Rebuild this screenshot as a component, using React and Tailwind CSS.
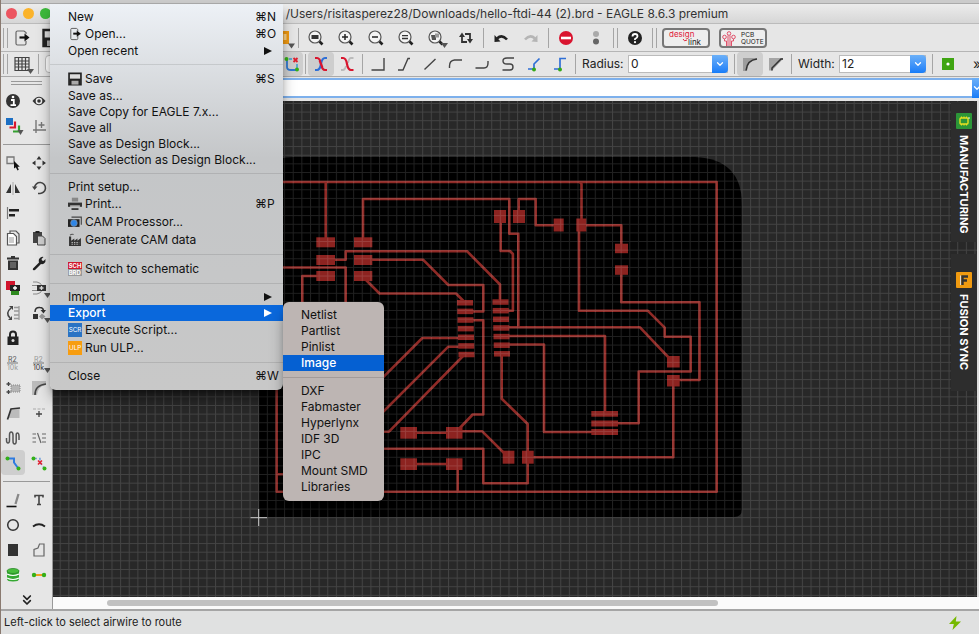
import { useState } from 'react'
import { ChevronDown, ChevronsDown } from 'lucide-react'

// --- ICONS (20x20 drawings) ---
const glass = (
  <>
    <circle cx="9" cy="9" r="6" fill="#f4f4f4" stroke="#555" strokeWidth="1.2" />
    <path d="M13.5 13.5l3 3" stroke="#222" strokeWidth="2.6" />
  </>
)
const tri = <path d="M15 15h7l-3.500 5z" fill="#555" />

const icons = {
  open: (
    <>
      <path d="M14 6V4.500L12 3H5.500Q4 3 4 4.500v11Q4 17 5.500 17h7Q14 17 14 15.500V13" fill="none" stroke="#666" strokeWidth="1.200" />
      <path d="M7.500 9.500h6" stroke="#111" strokeWidth="2.200" />
      <path d="M12.500 5.500l5 4-5 4z" fill="#111" />
    </>
  ),
  openMenu: (
    <>
      <path d="M14 6V3.500L12 2H5.500Q4 2 4 3.500v13Q4 18 5.500 18h7Q14 18 14 16.500V13" fill="none" stroke="#555" strokeWidth="1.300" />
      <path d="M7.500 9.500h6" stroke="#111" strokeWidth="2.800" />
      <path d="M12.500 5l6 4.500-6 4.500z" fill="#111" />
    </>
  ),
  save: (
    <>
      <path d="M1.500 2h17v16h-17z" fill="#ddd" stroke="#222" strokeWidth="2.400" />
      <path d="M2 9.500h16V18H2z" fill="#222" />
      <path d="M5 12.500h10V18H5z" fill="#aaa" />
    </>
  ),
  zoomFit: <>{glass}<path d="M5.500 7h7v4h-7z" fill="#333" /></>,
  zoomIn: <>{glass}<path d="M6 9h6M9 6v6" stroke="#222" strokeWidth="1.500" /></>,
  zoomOut: <>{glass}<path d="M6 9h6" stroke="#222" strokeWidth="1.500" /></>,
  zoomRedraw: <>{glass}<path d="M6 7.700h6M6 10.500h6" stroke="#333" strokeWidth="1.300" /></>,
  zoomSelect: <>{glass}<path d="M5 7h5v5H6z" fill="#555" /><path d="M9 5.500h4v4H9z" fill="#999" />{tri}</>,
  refresh: (
    <>
      <path d="M6 8v6h5M14 12V6H9" fill="none" stroke="#333" strokeWidth="1.800" />
      <path d="M3 9l3-4.500L9 9zM11 11h6l-3 4.500z" fill="#333" />
    </>
  ),
  undo: (
    <>
      <path d="M6 10.500Q11 6 16 11.500" fill="none" stroke="#222" strokeWidth="2.600" />
      <path d="M3.500 14V7l6 6.500z" fill="#222" />
    </>
  ),
  redo: (
    <>
      <path d="M14 10.500Q9 6 4 11.500" fill="none" stroke="#b5b5b5" strokeWidth="2.600" />
      <path d="M16.500 14V7l-6 6.500z" fill="#b5b5b5" />
    </>
  ),
  stop: <><circle cx="10" cy="10" r="7" fill="#d9142f" /><path d="M5 8.700h10v2.600H5z" fill="#fff" /></>,
  dots: <><circle cx="10" cy="6" r="3" fill="#aaa" /><circle cx="10" cy="13.500" r="3" fill="#666" /></>,
  help: (
    <>
      <circle cx="10" cy="10" r="7" fill="#222" />
      <path d="M7.500 8.500Q7.500 6 10 6t2.500 2.300Q12.500 9.700 10 11v1" fill="none" stroke="#fff" strokeWidth="1.800" />
      <circle cx="10" cy="14.200" r="1.100" fill="#fff" />
    </>
  ),
  orange: <><path d="M2 3h11v13H2z" fill="#f09a12" /><path d="M7.500 6h3v6h-3z" fill="#fbd38a" /><path d="M12 15.500h7l-3.500 5z" fill="#555" /></>,
  grid: (
    <>
      <path d="M3 3.500h14v13H3zM6.500 3.500v13M10 3.500v13M13.500 3.500v13M3 7h14M3 10h14M3 13h14" fill="none" stroke="#444" strokeWidth="1.200" />
      {tri}
    </>
  ),
  ratsnest: (
    <>
      <path d="M5 5v8q0 3 4 3h6" fill="none" stroke="#2f78d0" strokeWidth="1.800" />
      <path d="M7 5h3M15 10v4" stroke="#3a9ad0" strokeWidth="1.500" />
      <path d="M11.500 4l4 4M15.500 4l-4 4" stroke="#e02030" strokeWidth="1.800" />
      <circle cx="4.500" cy="5" r="2" fill="#35b018" />
      <circle cx="15" cy="15.500" r="2" fill="#35b018" />
    </>
  ),
  crossA: (
    <>
      <path d="M4 4h2q3 0 4 6t4 6h2" fill="none" stroke="#d8152e" strokeWidth="2.200" />
      <path d="M4 16h2q3 0 4-6t4-6h2" fill="none" stroke="#2f6fd6" strokeWidth="2.200" />
      <path d="M8.500 6.500q1 1.500 1.500 3.500t1.500 3.500" fill="none" stroke="#d8152e" strokeWidth="2.200" />
    </>
  ),
  crossB: (
    <>
      <path d="M11 9q1-5 3-5h2.500" fill="none" stroke="#bbb" strokeWidth="1.800" />
      <path d="M4 16h2q2 0 3-4" fill="none" stroke="#bbb" strokeWidth="1.800" />
      <path d="M4 4h2q3 0 4 6t4 6h2.500" fill="none" stroke="#d8152e" strokeWidth="2.200" />
    </>
  ),
  bend0: <path d="M3.500 16H16V4" fill="none" stroke="#444" strokeWidth="1.400" />,
  bend1: <path d="M4 16h5l5-11.500h2" fill="none" stroke="#444" strokeWidth="1.400" />,
  bend2: <path d="M4.500 15.500L15.500 5" fill="none" stroke="#444" strokeWidth="1.400" />,
  bend3: <path d="M3.500 14v-2q0-5.500 5-6H16" fill="none" stroke="#444" strokeWidth="1.400" />,
  bend4: <path d="M3.500 14H12q4 0 4-5V7" fill="none" stroke="#444" strokeWidth="1.400" />,
  bend5: <path d="M16 4H9Q5 4 5 7t4 3h3q3 0 3 3t-3 3H4.500" fill="none" stroke="#444" strokeWidth="1.400" />,
  bend6: (
    <>
      <path d="M4 15h6v-5l5.500-5.500" fill="none" stroke="#2f6fd6" strokeWidth="1.700" />
      <circle cx="10" cy="15.500" r="2" fill="#35a818" />
    </>
  ),
  bend7: (
    <>
      <path d="M4 15h6V4.500h6" fill="none" stroke="#2f6fd6" strokeWidth="1.700" />
      <circle cx="10" cy="15.500" r="2" fill="#35a818" />
    </>
  ),
  round: <><path d="M3 4h14v1Q8 6 7 17H3z" fill="#9d9d9d" /><path d="M6 16.500Q7 6 17 5" fill="none" stroke="#333" strokeWidth="1.500" /></>,
  chamfer: <><path d="M3 4h14v1L6 16.500H3z" fill="#a5a5a5" /><path d="M6 16.500V14L15 5h2" fill="none" stroke="#333" strokeWidth="1.500" /></>,
  via: <><path d="M4 4h12v12H4z" fill="#3fa512" /><circle cx="10" cy="10" r="1.600" fill="#fff" /></>,
  // side palette
  info: (
    <>
      <circle cx="10" cy="10" r="7" fill="#333" />
      <path d="M8 9h2.800v5M7.500 14.200h5.500" fill="none" stroke="#fff" strokeWidth="1.800" />
      <circle cx="10" cy="6" r="1.300" fill="#fff" />
    </>
  ),
  eye: (
    <>
      <path d="M3.500 10Q10 1.500 16.500 10 10 18.500 3.500 10z" fill="#333" />
      <circle cx="10" cy="10" r="3.300" fill="#eee" />
      <circle cx="10" cy="10" r="1.800" fill="#333" />
    </>
  ),
  layers: (
    <>
      <path d="M3 2h7v7H3z" fill="#1c6fc4" />
      <path d="M12 5.500v6H6.500" fill="none" stroke="#d8152e" strokeWidth="2.200" />
      <path d="M16 9.500v6h-6" fill="none" stroke="#35a030" strokeWidth="2.200" />
      <path d="M14.500 14h6l-3 5z" fill="#555" />
    </>
  ),
  mark: <path d="M7 4v13M4 14h13M9.500 9h6M12.500 6v6" fill="none" stroke="#777" strokeWidth="1.400" />,
  select: (
    <>
      <path d="M4 4h7v6.500H4z" fill="none" stroke="#777" strokeWidth="1.300" />
      <path d="M11 8v7.500l1.800-1.300 1.700 3.300 1.300-.8-1.300-3h2.300z" fill="#111" />
    </>
  ),
  move: <path d="M10 3l2.500 3.500h-5zM10 17l2.500-3.500h-5zM3 10l3.500-2.500v5zM17 10l-3.500-2.500v5z" fill="#333" />,
  mirror: <><path d="M10 4v13" stroke="#aaa" /><path d="M8 6v9H3zM12 6v9h5z" fill="#333" /></>,
  rotate: <><path d="M9 15.500h1.500A5.500 5.500 0 1 0 5.500 9.500" fill="none" stroke="#444" strokeWidth="1.600" /><path d="M3 8.500h5.500L5.500 12z" fill="#444" /></>,
  align: <><path d="M4.500 4v12" stroke="#777" strokeWidth="1.200" /><path d="M6 6h10v2.600H6zM6 11h6v2.600H6z" fill="#222" /></>,
  copy: (
    <>
      <path d="M7 5V3h6l3 3v9h-2" fill="none" stroke="#555" strokeWidth="1.200" />
      <path d="M4.500 5.500h6l3 3V17h-9z" fill="#fff" stroke="#555" strokeWidth="1.200" />
      <path d="M6 10h5M6 12h5M6 14h5" stroke="#999" />
    </>
  ),
  paste: <><path d="M4 4h9v11H4z" fill="#444" /><path d="M6.500 3h4v2h-4z" fill="#222" /><path d="M8.500 8h5l2.500 2.500V17H8.500z" fill="#ccc" stroke="#444" /></>,
  trash: <><path d="M4 4.500h12v2H4zM8 3h4v2H8zM5 7.500h10V17H5z" fill="#333" /><path d="M8 9v6M10 9v6M12 9v6" stroke="#aaa" strokeWidth=".8" /></>,
  wrench: <path d="M4 15.500l6-6Q9 6 11.500 4.500q1.700-1 3-.5l-2 2 .5 1.500 1.500.5 2-2q.5 3-1.500 4.500-1.500 1-3 .5l-6 6q-3 1-2-1.500z" fill="#222" />,
  add: (
    <>
      <path d="M3 3h9v9H3z" fill="#d0142c" />
      <path d="M8 12h8v5H8z" fill="#2f8a20" />
      <path d="M7 7h10v6H7z" fill="#222" />
      <path d="M12 8v4M10 10h4" stroke="#fff" strokeWidth="1.300" />
    </>
  ),
  addPin: (
    <>
      <path d="M4 4h4q4 0 6 6-2 6-6 6H4M3 7.500h6M3 12.500h6" fill="none" stroke="#888" />
      <path d="M8 7h9v6H8z" fill="#333" />
      <path d="M12.500 8v4M10.500 10h4M3 10h4" stroke="#ddd" strokeWidth="1.300" />
      {tri}
    </>
  ),
  pinswap: (
    <>
      <path d="M8 5Q2 10 7 15" fill="none" stroke="#444" strokeWidth="1.600" />
      <path d="M6 3h4v4zM5 17h4v-4z" fill="#444" />
      <path d="M16 3v14M11 4.500h5M11 8h5M11 12h5M11 15.500h5" stroke="#999" strokeWidth="1.300" />
    </>
  ),
  gateswap: (
    <>
      <path d="M6 9q0-5 5-4.500 3 0 3.500 3" fill="none" stroke="#333" strokeWidth="1.500" />
      <path d="M11.500 7h5.500l-2.500 3.500zM4 11h5v5H4z" fill="#333" />
      <path d="M13 10.500l3.500 3-3.500 3-3-3z" fill="#999" />
      {tri}
    </>
  ),
  lock: (
    <>
      <path d="M7 9V6.500q0-3 3-3t3 3V9" fill="none" stroke="#222" strokeWidth="2" />
      <path d="M4.500 8.500h11V17h-11z" fill="#222" />
      <circle cx="10" cy="12.500" r="1.500" fill="#ddd" />
    </>
  ),
  name: (
    <>
      <text x="5" y="8.500" fontSize="7" fill="#555">R2</text>
      <path d="M4 10h11" stroke="#777" />
      <text x="4" y="17" fontSize="7" fill="#999">10k</text>
    </>
  ),
  value: (
    <>
      <text x="5" y="8.500" fontSize="7" fill="#999">R2</text>
      <path d="M4 10h11" stroke="#777" />
      <text x="4" y="17" fontSize="7" fill="#333">10k</text>
      {tri}
    </>
  ),
  smash: <><path d="M8 7h9v7H8z" fill="#b5b5b5" stroke="#888" strokeDasharray="1 1" /><path d="M3.500 6h4M5.500 4v4M3.500 14h4M5.500 12v4" stroke="#444" strokeWidth="1.300" /></>,
  miter: <><path d="M3 3h14v4Q9 8 8 17H3z" fill="#bbb" /><path d="M6 17Q6 7 17 6" fill="none" stroke="#444" strokeWidth="1.600" /></>,
  split: <><path d="M7.500 7l9-1v9h-11z" fill="#bbb" /><path d="M4.500 16.500L8 6l9-1" fill="none" stroke="#333" strokeWidth="1.700" /></>,
  optimize: <><path d="M4 6h3M8.500 6h3M13 6h3" stroke="#aaa" /><path d="M10 8v6M7 11h6" stroke="#444" strokeWidth="1.300" /></>,
  meander: <path d="M3.500 10v2q0 3 1.500 3t1.500-3V7q0-3 1.700-3T10 7v6q0 3 1.600 3t1.600-3V7q0-2 1.300-2T16 8v4" fill="none" stroke="#555" strokeWidth="1.500" />,
  fanout: <path d="M3.500 6H7M3.500 10H7M3.500 14H7M8.500 5l3.500 10M13 6h4M13 10h4M13 14h4" stroke="#666" strokeWidth="1.200" />,
  route: (
    <>
      <path d="M5 5.500h6v4l4 5.500" fill="none" stroke="#2f7be0" strokeWidth="2" />
      <circle cx="4.500" cy="5.500" r="2" fill="#35b018" />
      <circle cx="15.500" cy="15.500" r="2" fill="#35b018" />
    </>
  ),
  ripup: (
    <>
      <path d="M5 5.500h6v4l4 5.500" fill="none" stroke="#7aa5dd" strokeDasharray="3 2" strokeWidth="1.500" />
      <path d="M9 7.500l4 4M13 7.500l-4 4" stroke="#e02030" strokeWidth="1.600" />
      <circle cx="4.500" cy="5.500" r="2" fill="#35b018" />
      <circle cx="15.500" cy="15.500" r="2" fill="#35b018" />
    </>
  ),
  line: <><path d="M3.500 16.500h10" stroke="#111" strokeWidth="1.600" /><path d="M12.500 14l3-10" stroke="#888" strokeWidth="2.300" /></>,
  text: <path d="M6 7.500V5.500h8v2M10 5.500V14M8 14.500h4" fill="none" stroke="#444" strokeWidth="1.600" />,
  circle: <circle cx="10" cy="10" r="5.300" fill="none" stroke="#333" strokeWidth="1.500" />,
  arc: <path d="M4 11.500q6-4.500 12 0" fill="none" stroke="#222" strokeWidth="1.900" />,
  rect: <path d="M5 4h10v12H5z" fill="#333" />,
  polygon: <path d="M5 16V9.500L9 8l1.500-4H15v12z" fill="none" stroke="#666" strokeWidth="1.200" />,
  viaStack: (
    <>
      <path d="M4 6v8q0 2.500 6 2.500t6-2.500V6z" fill="#35a832" />
      <path d="M4 9q6 3 12 0M4 13q6 3 12 0" fill="none" stroke="#fff" strokeWidth="1.200" />
      <ellipse cx="10" cy="6" rx="6" ry="2.500" fill="#48bd3c" stroke="#2b8a28" strokeWidth=".8" />
    </>
  ),
  signal: (
    <>
      <path d="M5 10h10" stroke="#f0a020" strokeWidth="2" />
      <circle cx="5" cy="10" r="2.200" fill="#35b018" />
      <circle cx="15" cy="10" r="2.200" fill="#35b018" />
    </>
  ),
  // menu
  print: (
    <>
      <path d="M5.500 1h9v5.500h-9z" fill="#888" />
      <path d="M0 8h20v6H0z" fill="#333" />
      <path d="M3 12h14v2H3z" fill="#ccc" />
      <path d="M5 16h10v2.500H5z" fill="#333" />
    </>
  ),
  cam: (
    <>
      <path d="M5 3h14v11" fill="none" stroke="#444" strokeWidth="1.600" />
      <path d="M0 6h16.500v11H0z" fill="#222" />
      <circle cx="8.500" cy="11.500" r="4.800" fill="#2f86e6" stroke="#999" strokeWidth=".8" />
    </>
  ),
  factory: (
    <>
      <path d="M1.500 18.500V5h3v6L9 8v3l4.500-3v3L18.500 7v11.500z" fill="#333" />
      <path d="M3 3q2-2 5-1" stroke="#555" fill="none" strokeWidth="1.500" />
      <path d="M5 13.500h11M5 16h11" stroke="#ddd" strokeWidth="1.200" strokeDasharray="2 1.500" />
    </>
  ),
  schBrd: (
    <>
      <path d="M0 0h20v10H0z" fill="#d0182c" />
      <path d="M0 10h20v10H0z" fill="#999" />
      <text x="1" y="8.800" fontSize="8.500" fontWeight="700" fill="#fff">SCH</text>
      <text x="1" y="18.500" fontSize="8.500" fontWeight="700" fill="#fff">BRD</text>
    </>
  ),
  scr: <><path d="M0 0h20v20H0z" fill="#2a73c4" /><text x="1" y="13.500" fontSize="9" fill="#fff">SCR</text></>,
  ulp: <><path d="M0 0h20v20H0z" fill="#f79d10" /><text x="1.500" y="13.500" fontSize="9" fill="#fff">ULP</text></>,
}

function Icon({ name, className = 'w-5 h-5' }) {
  return (
    <svg viewBox="0 0 20 20" className={`shrink-0 overflow-visible ${className}`} aria-hidden="true">
      {icons[name]}
    </svg>
  )
}

function Tool({ name, pressed, className = 'w-[30px]' }) {
  return (
    <button
      aria-label={name}
      className={`h-6 shrink-0 flex items-center justify-center rounded-sm ${className} ${pressed ? 'bg-[#cecece]' : ''}`}
    >
      <Icon name={name} />
    </button>
  )
}

const Sep = () => <div className="w-[5px] h-5 shrink-0 flex justify-center"><div className="w-px bg-[#a5a5a5]" /></div>

const DoubleSep = () => (
  <div className="w-[9px] h-5 shrink-0 flex justify-center gap-[3px]">
    <div className="w-px bg-[#a5a5a5]" />
    <div className="w-px bg-[#a5a5a5]" />
  </div>
)

function Combo({ id, label, value, labelClass, boxClass }) {
  return (
    <>
      <label htmlFor={id} className={`ml-1 shrink-0 ${labelClass}`}>{label}</label>
      <div className={`relative shrink-0 h-[18px] flex ${boxClass}`}>
        <select id={id} className="appearance-none w-full bg-white border border-[#bbb] pl-0.5 leading-4 outline-none">
          <option>{value}</option>
        </select>
        <span className="absolute right-0 inset-y-0 w-4 rounded-r-sm bg-gradient-to-b from-[#6bb0f8] to-[#147cf8] flex items-center justify-center pointer-events-none">
          <ChevronDown size={10} strokeWidth={3} color="#fff" />
        </span>
      </div>
    </>
  )
}

// --- MENUS ---
const fileMenu = [
  { label: 'New', keys: '⌘N' },
  { label: 'Open...', icon: 'openMenu', keys: '⌘O' },
  { label: 'Open recent', arrow: true },
  null,
  { label: 'Save', icon: 'save', keys: '⌘S' },
  { label: 'Save as...' },
  { label: 'Save Copy for EAGLE 7.x...' },
  { label: 'Save all' },
  { label: 'Save as Design Block...' },
  { label: 'Save Selection as Design Block...' },
  null,
  { label: 'Print setup...' },
  { label: 'Print...', icon: 'print', keys: '⌘P' },
  { label: 'CAM Processor...', icon: 'cam' },
  { label: 'Generate CAM data', icon: 'factory' },
  null,
  { label: 'Switch to schematic', icon: 'schBrd' },
  null,
  { label: 'Import', arrow: true },
  { label: 'Export', arrow: true, sub: true },
  { label: 'Execute Script...', icon: 'scr' },
  { label: 'Run ULP...', icon: 'ulp' },
  null,
  { label: 'Close', keys: '⌘W' },
]

const exportMenu = [
  'Netlist', 'Partlist', 'Pinlist', 'Image', null,
  'DXF', 'Fabmaster', 'Hyperlynx', 'IDF 3D', 'IPC', 'Mount SMD', 'Libraries',
]

function ExportMenu() {
  const [active, setActive] = useState('Image')
  return (
    <ul className="absolute left-full -top-[3px] w-[101px] pt-[5px] pb-1.5 rounded-md bg-[#bdb5b3] text-[#111] shadow-lg shadow-black/50">
      {exportMenu.map((label, i) =>
        label ? (
          <li key={i}>
            <button
              onMouseEnter={() => setActive(label)}
              className={`w-full h-4 flex items-center pl-[18px] ${label === active ? 'bg-[#0560d2] text-white font-medium' : ''}`}
            >
              {label}
            </button>
          </li>
        ) : (
          <li key={i} className="h-3 flex items-center"><div className="w-full h-px bg-[#a39b99]" /></li>
        )
      )}
    </ul>
  )
}

function FileMenu() {
  return (
    <ul className="absolute left-[49px] top-1 w-[233px] pt-[5px] pb-1.5 z-20 rounded-b-md bg-gradient-to-b from-[#edf1f6] via-[#c4c6c8] via-40% to-[#c8c8c8] text-[#111] shadow-lg shadow-black/50">
      {fileMenu.map((item, i) =>
        item ? (
          <li key={i} className="relative">
            <button
              className={`w-full flex items-center pl-[18px] pr-1 text-left ${item.icon ? 'h-[18px]' : 'h-4'} ${item.sub ? 'bg-[#0a68dc] text-white font-medium' : ''}`}
            >
              {item.icon && <Icon name={item.icon} className="w-3.5 h-3.5 mr-[3px]" />}
              <span className="flex-1 whitespace-nowrap">{item.label}</span>
              {item.keys && <span className="w-6 whitespace-nowrap">{item.keys}</span>}
              {item.arrow && (
                <svg viewBox="0 0 8 8" className="w-2 h-2 mr-[7px]"><path d="M0 0l8 4-8 4z" fill="currentColor" /></svg>
              )}
            </button>
            {item.sub && <ExportMenu />}
          </li>
        ) : (
          <li key={i} className="h-[11px] flex items-center"><div className="w-full h-px bg-black/10" /></li>
        )
      )}
    </ul>
  )
}

// --- BOARD ---
const traces = [
  'M276.700 491.700V182H716.700V491.700ZM276.700 474.300H300',
  'M325.700 182V240M363 240V199H509.300V233.700H518.300V327.300',
  'M518.700 216V199H535.700V225.300H556',
  'M581.500 222V184L580 182M586 225.300H621.300V246',
  'M621.300 272V302.300H699.500V380H678',
  'M579 230V310.700H647.700L664.700 327.700V336.700H690.700V371.500H638.700V423.300H616',
  'M506 327.300H640L670 359M673.300 384V457.300H530',
  'M506 336H605V413M506 344.500H544V432H594',
  'M501.700 353V398.700L527.700 424V483.300H483.300V448.700H380',
  'M460 431.300H482.300L505 454M410 432.700H450M410 464H450M457.700 468V491.700',
  'M456 432L472.700 414.500H483.300V320.300H470',
  'M470 311.500H483.300V285H448.300L423 259.700H370',
  'M333 259.700H345.700V251.200H467L500 284.500V300',
  'M365 279L379.500 293.500H456L464 301.500',
  'M283 267.500H345.700V310M318 276H302.300V310',
  'M500.700 220V251H510L512.900 254V310.700H506',
  'M460 338H422.300L370 390.300M460 346.700H448.300L380 415M464 355L389 431.700H380',
]

const pads = [
  [494, 210, 12, 13], [513, 210, 12, 13], [553.700, 218.500, 10, 13], [576.300, 218.500, 10, 13],
  [615, 243.700, 13, 9.500], [615, 265.300, 13, 9.500],
  [316.300, 237.300, 18.700, 10], [316.300, 255, 18.700, 10], [316.300, 271, 18.700, 10],
  [354, 237.300, 18.300, 10], [354, 255, 18.300, 10], [354, 271, 18.300, 10],
  [667, 356, 12.700, 11.500], [667, 375, 12.700, 11.500],
  [591.300, 411, 26.700, 5.700], [591.300, 420.500, 26.700, 6], [591.300, 429, 26.700, 6],
  [502.700, 450.700, 11.700, 13], [522, 450.700, 11.700, 13],
  [400.300, 427, 16.700, 11.700], [446, 427, 16.500, 11.700],
  [400.300, 458.300, 16.700, 11.700], [446, 458.300, 16.500, 11.700],
]

function Board() {
  return (
    <svg className="absolute inset-0 w-full h-full">
      <defs>
        <pattern id="grid" x="258.200" y="517.200" width="8.630" height="8.630" patternUnits="userSpaceOnUse">
          <path d="M.5 0V8.630M0 .5H8.630" stroke="#fff" strokeOpacity=".13" />
        </pattern>
      </defs>
      <g transform="translate(-53 -101)">
        <path d="M259 192Q259 157 294 157H695Q742 159 742 205V509Q742 517 734 517H259Z" fill="#000" />
        <g fill="none" stroke="#8f2a26" strokeWidth="2.600" strokeLinejoin="round">
          {traces.map((d, i) => <path key={i} d={d} />)}
        </g>
        <g fill="#8c2320">
          {pads.map(([x, y, w, h], i) => <rect key={i} x={x} y={y} width={w} height={h} />)}
          {Array.from({ length: 7 }).map((_, i) => (
            <g key={i}>
              <rect x={457 + i / 4} y={300 + i * 8.63} width="16" height="5.500" />
              <rect x={492.5 + i / 4} y={299.3 + i * 8.63} width="16" height="5.500" />
            </g>
          ))}
        </g>
        <rect x="53" y="101" width="100%" height="100%" fill="url(#grid)" />
        <path d="M250.500 517.700H267M258.700 509V526" stroke="#ccc" />
      </g>
    </svg>
  )
}

const palette = [
  ['info', 'eye', 'layers', 'mark'],
  [
    'select', 'move', 'mirror', 'rotate', 'align', null, 'copy', 'paste', 'trash', 'wrench', 'add', 'addPin',
    'pinswap', 'gateswap', 'lock', null, 'name', 'value', 'smash', 'miter', 'split', 'optimize', 'meander', 'fanout',
    'route', 'ripup',
  ],
  ['line', 'text', 'circle', 'arc', 'rect', 'polygon', 'viaStack', 'signal'],
]

function Palette() {
  return (
    <aside className="w-[52px] shrink-0 border-r border-[#999] bg-[#e6e6e6] flex flex-col">
      <div className="h-[11px] shrink-0 px-2.5 pt-1 flex flex-col gap-0.5">
        <div className="h-px bg-[#999]" />
        <div className="h-px bg-[#999]" />
      </div>
      {palette.map((group, g) => (
        <div key={g}>
          {g > 0 && <div className="h-3 px-0.5 flex items-center"><div className="w-full h-px bg-[#999]" /></div>}
          <div className="grid grid-cols-2">
            {group.map((name, i) =>
              name ? <Tool key={i} name={name} pressed={name === 'route'} className="w-6 h-[25px]" /> : <span key={i} />
            )}
          </div>
        </div>
      ))}
      <button aria-label="More tools" className="flex-1 flex items-center justify-center pt-1">
        <ChevronsDown size={16} strokeWidth={2.5} color="#222" />
      </button>
    </aside>
  )
}

function SideTab({ label, icon, className }) {
  return (
    <button className={`w-[26px] flex flex-col items-center gap-1.5 bg-[#2d2d2d] text-white text-[11px] font-bold ${className}`}>
      {icon}
      <span className="[writing-mode:vertical-rl] leading-4 whitespace-nowrap">{label}</span>
    </button>
  )
}

export default function App() {
  return (
    <div className="relative h-screen overflow-hidden flex flex-col border-l border-[#8a7a70] bg-[#e6e6e6] text-[#222] text-xs font-['Inter','DejaVu_Sans',sans-serif]">
      <div className="h-1 shrink-0 bg-[#cbcbcb] border-b border-[#aaa]" />

      {/* TITLE BAR */}
      <header className="relative h-5 shrink-0 flex items-center justify-center pr-5 bg-gradient-to-b from-[#ececec] to-[#d6d6d6] border-b border-[#bbb]">
        <div className="absolute left-[5px] flex gap-1.5">
          <span className="w-[11px] h-[11px] rounded-full bg-[#ec5560]" />
          <span className="w-[11px] h-[11px] rounded-full bg-[#fbb32a]" />
          <span className="w-[11px] h-[11px] rounded-full bg-[#3cb83a]" />
        </div>
        <h1 className="whitespace-nowrap text-[#333]">1 Board - /Users/risitasperez28/Downloads/hello-ftdi-44 (2).brd - EAGLE 8.6.3 premium</h1>
      </header>

      {/* MAIN TOOLBAR */}
      <div className="h-7 shrink-0 flex items-center border-b border-[#b5b5b5]">
        <div className="w-[295px] shrink-0 flex items-center">
          <DoubleSep />
          <Tool name="open" className="w-6" />
          <Tool name="save" className="w-6 ml-1.5" />
          <Tool name="orange" className="w-5 ml-auto" />
        </div>
        <Sep />
        <Tool name="zoomFit" />
        <Tool name="zoomIn" />
        <Tool name="zoomOut" />
        <Tool name="zoomRedraw" />
        <Tool name="zoomSelect" />
        <Tool name="refresh" />
        <Sep />
        <Tool name="undo" />
        <Tool name="redo" />
        <Sep />
        <Tool name="stop" />
        <Tool name="dots" />
        <DoubleSep />
        <Tool name="help" />
        <DoubleSep />
        <button className="ml-[3px] w-12 h-5 shrink-0 border-2 border-[#777] rounded-sm bg-[#eee]">
          <svg viewBox="0 0 44 16" className="w-full h-full">
            <text x="5" y="7" fontSize="8" fill="#e0203a">design</text>
            <path d="M19 9q1 3 4 1" fill="none" stroke="#e0203a" />
            <text x="24" y="14.500" fontSize="8" fill="#222">link</text>
          </svg>
        </button>
        <button className="ml-[9px] w-12 h-5 shrink-0 border-2 border-[#777] rounded-sm bg-[#eee]">
          <svg viewBox="0 0 44 16" className="w-full h-full">
            <g fill="none" stroke="#e0506a">
              <circle cx="3.500" cy="7" r="1.800" /><circle cx="8" cy="3.500" r="1.800" /><circle cx="12.500" cy="7" r="1.800" />
              <path d="M3.500 9v2h2v5M7 5.500V16M9 5.500V16M12.500 9v2h-2v5" />
            </g>
            <text x="20" y="7" fontSize="6.500" fill="#222">PCB</text>
            <text x="20" y="14" fontSize="6.500" fill="#222">QUOTE</text>
          </svg>
        </button>
      </div>

      {/* ROUTE OPTIONS */}
      <div className="h-[25px] shrink-0 flex items-center border-b border-[#aaa]">
        <div className="w-[302px] shrink-0 flex items-center">
          <DoubleSep />
          <Tool name="grid" className="w-6" />
          <div className="ml-0.5"><Sep /></div>
          <input aria-label="Layer" className="ml-1 w-40 h-[18px] bg-white border border-[#bbb] rounded-sm" />
          <Tool name="ratsnest" pressed className="w-[22px] ml-auto" />
        </div>
        <Sep />
        <Tool name="crossA" pressed className="w-[26px]" />
        <Tool name="crossB" className="w-[26px]" />
        <Sep />
        <Tool name="bend0" className="w-[26px]" />
        <Tool name="bend1" className="w-[26px]" />
        <Tool name="bend2" className="w-[26px]" />
        <Tool name="bend3" className="w-[26px]" />
        <Tool name="bend4" className="w-[26px]" />
        <Tool name="bend5" className="w-[26px]" />
        <Tool name="bend6" className="w-[26px]" />
        <Tool name="bend7" className="w-[26px]" />
        <Sep />
        <Combo id="radius" label="Radius:" value="0" labelClass="w-[46px]" boxClass="w-[100px] mr-1" />
        <Sep />
        <Tool name="round" pressed className="w-[26px]" />
        <Tool name="chamfer" className="w-[26px]" />
        <Sep />
        <Combo id="width" label="Width:" value="12" labelClass="w-[41px]" boxClass="w-[87px] mr-1" />
        <Sep />
        <Tool name="via" className="w-[26px]" />
        <button aria-label="More" className="ml-auto w-1.5 overflow-hidden text-sm leading-4">»</button>
      </div>

      {/* WORKSPACE */}
      <main className="flex-1 min-h-0 flex">
        <Palette />
        <section className="flex-1 min-w-0 flex flex-col">
          <div className="h-6 shrink-0 pt-px pb-[3px] flex">
            <input aria-label="Command line" className="flex-1 min-w-0 bg-white border-2 border-r-0 border-[#7db0ec] outline-none" />
            <button aria-label="Command history" className="w-[7px] overflow-hidden bg-gradient-to-b from-[#6bb0f8] to-[#147cf8]">
              <ChevronDown size={10} strokeWidth={3} color="#fff" />
            </button>
          </div>
          <div className="relative flex-1 min-h-0 bg-[#282828] border-r-2 border-[#ddd]">
            <Board />
            <div className="absolute right-0 top-px flex flex-col gap-3">
              <SideTab
                label="MANUFACTURING"
                className="h-[140px] pt-[11px]"
                icon={
                  <svg viewBox="0 0 16 16" className="w-4 h-4 shrink-0">
                    <rect width="16" height="16" rx="1" fill="#2c9638" />
                    <path d="M5.500 3.500v9M8 3.500v9M10.500 3.500v9" stroke="#e8e020" strokeWidth="1.200" />
                    <rect x="4" y="5" width="8" height="6" rx="1" fill="#2c9638" stroke="#e8e020" strokeWidth="1.400" />
                    <circle cx="13" cy="5" r=".8" fill="#fff" />
                  </svg>
                }
              />
              <SideTab
                label="FUSION SYNC"
                className="h-[137px] pt-[18px]"
                icon={
                  <svg viewBox="0 0 16 16" className="w-4 h-4 shrink-0">
                    <rect width="16" height="16" rx="1" fill="#f09a10" />
                    <path d="M6.500 13V4.500H12M6.500 8.500h4.500" fill="none" stroke="#333" strokeWidth="2.400" />
                    <path d="M4.500 13V3.500" stroke="#ddd" />
                  </svg>
                }
              />
            </div>
          </div>
          <div className="h-3 shrink-0 bg-[#fafafa] flex items-center pl-[54px] pr-3">
            <div className="w-[71%] h-1.5 rounded-full bg-[#c1c1c1]" />
          </div>
        </section>
      </main>

      {/* STATUS BAR */}
      <footer className="h-[25px] shrink-0 border-t-2 border-[#a5a5a5] flex items-center justify-between pl-[3px] pr-[18px] bg-[#e0e1e1] text-[11px]">
        <span>Left-click to select airwire to route</span>
        <svg viewBox="0 0 12 14" className="w-3 h-3.5" aria-hidden="true">
          <path d="M7.500 0L0 8h4.800L3.500 14 12 5.500H6.800z" fill="#76b900" />
        </svg>
      </footer>

      <FileMenu />
    </div>
  )
}
